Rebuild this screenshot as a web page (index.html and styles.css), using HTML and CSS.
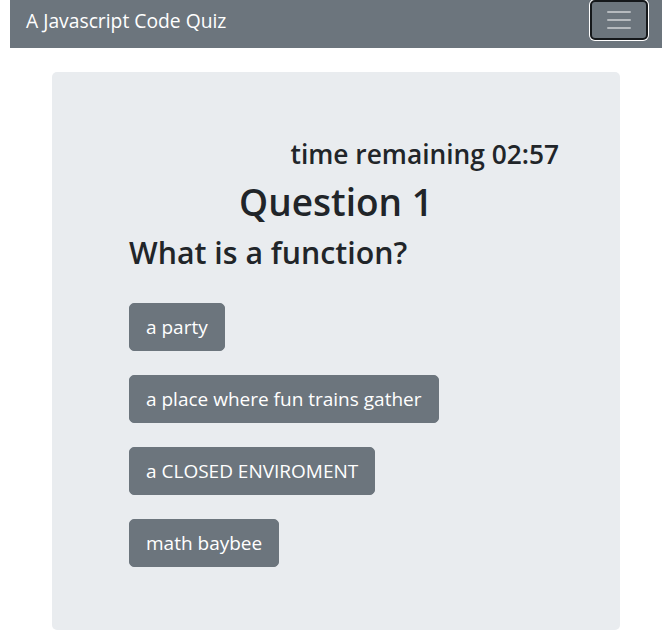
FILE: index.html
```html
<!DOCTYPE html>
<html lang="en">
<head>
<meta charset="utf-8">
<title>A Javascript Code Quiz</title>
<link rel="stylesheet" href="styles.css">
</head>
<body>
<div class="page">
  <nav class="navbar">
    <span class="brand">A Javascript Code Quiz</span>
    <button class="toggler" type="button" aria-label="Toggle navigation">
      <svg width="30" height="30" viewBox="0 0 30 30" aria-hidden="true">
        <path d="M4 7h22M4 15h22M4 23h22" stroke="rgba(255,255,255,0.5)" stroke-width="2" stroke-linecap="round" fill="none"/>
      </svg>
    </button>
  </nav>
  <main class="jumbotron">
    <h3 class="timer">time remaining 02:57</h3>
    <h1 class="qnum">Question 1</h1>
    <h2 class="qtext">What is a function?</h2>
    <div class="answers">
      <button class="btn" type="button">a party</button>
      <button class="btn" type="button">a place where fun trains gather</button>
      <button class="btn" type="button">a CLOSED ENVIROMENT</button>
      <button class="btn" type="button">math baybee</button>
    </div>
  </main>
</div>
</body>
</html>
```
FILE: styles.css
```css
* { box-sizing: border-box; }
html, body { margin: 0; padding: 0; background: #fff; }
body {
  font-family: "Open Sans", "Noto Sans", sans-serif;
  color: #212529;
}
.page {
  margin-left: 10px;
  width: 652px;
}
.navbar {
  height: 48px;
  background: #6c757d;
  padding: 0 14px 8px 16px;
  display: flex;
  align-items: flex-start;
  justify-content: space-between;
}
.brand {
  color: #fff;
  font-size: 19.3px;
  line-height: 30px;
  padding: 6px 0 4px 0;
}
.toggler {
  margin-top: 0;
  width: 58px;
  height: 40px;
  padding: 0;
  background: #6c757d;
  border: 2px solid #15181b;
  border-radius: 5px;
  box-shadow: 0 0 0 1px #fff;
  display: flex;
  align-items: center;
  justify-content: center;
}
.toggler svg { display: block; }
.jumbotron {
  margin: 24px 42px 0 42px;
  background: #e9ecef;
  border-radius: 5px;
  padding: 64px 61px 63px 77px;
  display: flex;
  flex-direction: column;
}
.timer {
  margin: 2px 0 8px 0;
  font-size: 26.3px;
  line-height: 32px;
  font-weight: 600;
  text-align: right;
}
.qnum {
  margin: 0 0 8px 0;
  font-size: 37px;
  line-height: 48px;
  font-weight: 600;
  text-align: center;
  padding-right: 16px;
}
.qtext {
  margin: 0 0 31px 0;
  font-size: 30.3px;
  line-height: 38px;
  font-weight: 600;
}
.answers {
  display: flex;
  flex-direction: column;
  align-items: flex-start;
  gap: 24px;
}
.btn {
  font-family: inherit;
  font-size: 19px;
  line-height: 30px;
  padding: 8px 16px;
  color: #fff;
  background: #6c757d;
  border: 1px solid #6c757d;
  border-radius: 5px;
}
```
